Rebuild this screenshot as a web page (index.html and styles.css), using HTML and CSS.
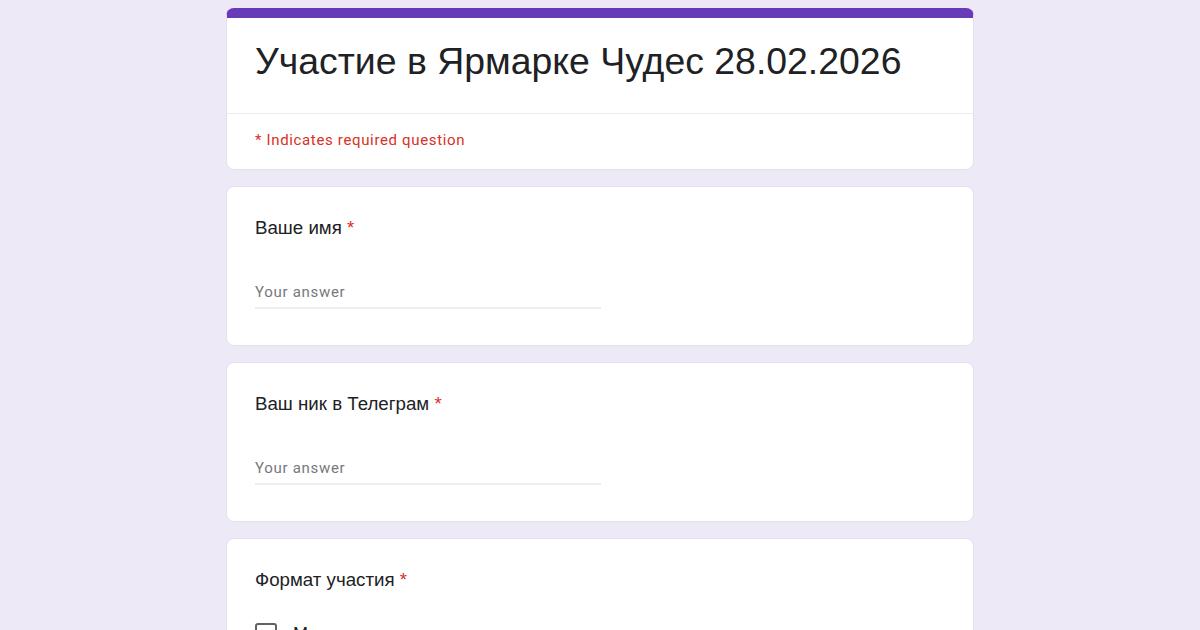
FILE: index.html
```html
<!DOCTYPE html>
<html lang="ru">
<head>
<meta charset="utf-8">
<title>Участие в Ярмарке Чудес 28.02.2026</title>
<link rel="stylesheet" href="styles.css">
</head>
<body>
<main class="form">
  <section class="card title-card">
    <div class="title-head">
      <h1 class="title">Участие в Ярмарке Чудес 28.02.2026</h1>
    </div>
    <div class="required-note">* Indicates required question</div>
  </section>
  <section class="card question">
    <div class="q-label">Ваше имя <span class="star">*</span></div>
    <div class="answer"><span class="placeholder">Your answer</span></div>
  </section>
  <section class="card question">
    <div class="q-label">Ваш ник в Телеграм <span class="star">*</span></div>
    <div class="answer"><span class="placeholder">Your answer</span></div>
  </section>
  <section class="card question">
    <div class="q-label">Формат участия <span class="star">*</span></div>
    <div class="options">
      <label class="option"><span class="box"></span><span class="opt-text">Мастер</span></label>
    </div>
  </section>
</main>
</body>
</html>
```
FILE: styles.css
```css
html, body {
  margin: 0;
  padding: 0;
  background: #ede9f7;
  height: 630px;
  overflow: hidden;
}
.form {
  width: 748px;
  margin: 0 auto;
  padding-top: 8px;
  display: flex;
  flex-direction: column;
  gap: 16px;
}
.card {
  background: #fff;
  border: 1px solid #e2e0ea;
  border-radius: 8px;
  box-sizing: border-box;
}
.title-card {
  border-top: 10px solid #673ab7;
  height: 162px;
}
.title-head {
  height: 96px;
  border-bottom: 1px solid #ebebeb;
  padding: 0 28px;
  box-sizing: border-box;
}
.title {
  margin: 0;
  font-family: "Liberation Sans", Arial, sans-serif;
  font-weight: 400;
  font-size: 37.4px;
  line-height: 44px;
  padding-top: 21px;
  color: #202124;
}
.required-note {
  padding: 16px 28px 0;
  font-family: Roboto, "Noto Sans", sans-serif;
  font-size: 15px;
  line-height: 20px;
  color: #d93025;
  letter-spacing: 0.65px;
}
.question {
  height: 160px;
  padding: 29px 28px 0;
}
.q-label {
  font-family: "Liberation Sans", Arial, sans-serif;
  font-size: 18.7px;
  line-height: 24px;
  color: #202124;
}
.star {
  color: #d93025;
}
.answer {
  margin-top: 42px;
  width: 346px;
  border-bottom: 2px solid #eceef0;
  padding-bottom: 5px;
}
.placeholder {
  font-family: Roboto, "Noto Sans", sans-serif;
  font-size: 15px;
  line-height: 20px;
  color: #76797e;
  letter-spacing: 0.7px;
}
.options {
  margin-top: 31px;
}
.option {
  display: flex;
  align-items: center;
  gap: 16px;
  font-family: "Liberation Sans", Arial, sans-serif;
  font-size: 18px;
  color: #202124;
}
.box {
  width: 18px;
  height: 18px;
  border: 2px solid #5f6368;
  border-radius: 3px;
}
```
